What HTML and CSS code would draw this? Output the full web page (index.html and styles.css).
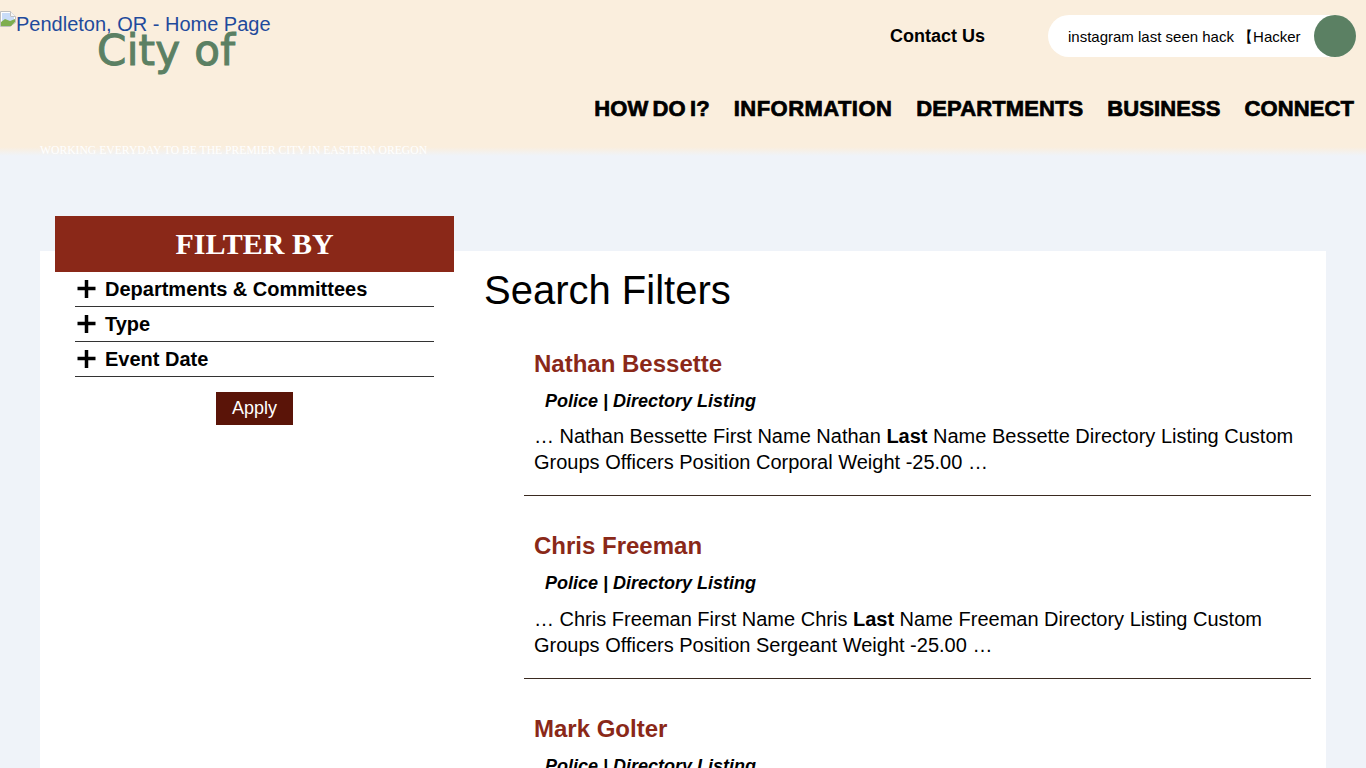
FILE: index.html
```html
<!DOCTYPE html>
<html lang="en">
<head>
    <meta charset="UTF-8">
    <meta name="viewport" content="width=device-width, initial-scale=1.0">
    <title>Search Filters</title>
    <link rel="stylesheet" href="styles.css">
</head>
<body>
    <header class="site-header">
        <div class="brand">
            <a class="logo-alt" href="#"><svg class="broken-img" width="16" height="16" viewBox="0 0 16 16"><path d="M.5.5h10l5 5v6l-3 2-2 2H.5z" fill="#fff" stroke="#c0c0c0"/><path d="M10.5.5v5h5" fill="#f6f6f6" stroke="#c0c0c0"/><path d="M2 2h8v4h4v3L2 12z" fill="#c9dcf8"/><path d="M1 15v-4l4-3 5 2 5-2v3l-4 4z" fill="#7fae4f"/></svg>Pendleton, OR - Home Page</a>
            <div class="logo-city">City of</div>
            <div class="tagline">WORKING EVERYDAY TO BE THE PREMIER CITY IN EASTERN OREGON</div>
        </div>
        <div class="header-right">
            <div class="top-row">
                <a class="contact" href="#">Contact Us</a>
                <div class="search">
                    <span class="search-text">instagram last seen hack 【Hacker</span>
                    <span class="search-btn"></span>
                </div>
            </div>
            <nav class="main-nav">
                <a href="#">HOW DO I?</a>
                <a href="#">INFORMATION</a>
                <a href="#">DEPARTMENTS</a>
                <a href="#">BUSINESS</a>
                <a href="#">CONNECT</a>
            </nav>
        </div>
    </header>

    <main class="page">
        <aside class="sidebar">
            <h2 class="filter-title">FILTER BY</h2>
            <ul class="filter-list">
                <li><svg class="plus" width="20" height="20" viewBox="0 0 20 20"><path d="M9.5 1v18M.5 9.5h18" stroke="#000" stroke-width="3.5"/></svg>Departments &amp; Committees</li>
                <li><svg class="plus" width="20" height="20" viewBox="0 0 20 20"><path d="M9.5 1v18M.5 9.5h18" stroke="#000" stroke-width="3.5"/></svg>Type</li>
                <li><svg class="plus" width="20" height="20" viewBox="0 0 20 20"><path d="M9.5 1v18M.5 9.5h18" stroke="#000" stroke-width="3.5"/></svg>Event Date</li>
            </ul>
            <div class="apply-row"><button class="apply">Apply</button></div>
        </aside>

        <section class="results">
            <h1>Search Filters</h1>
            <article class="result">
                <h3><a href="#">Nathan Bessette</a></h3>
                <p class="meta">Police | Directory Listing</p>
                <p class="snippet">… Nathan Bessette First Name Nathan <b>Last</b> Name Bessette Directory Listing Custom Groups Officers Position Corporal Weight -25.00 …</p>
            </article>
            <article class="result">
                <h3><a href="#">Chris Freeman</a></h3>
                <p class="meta">Police | Directory Listing</p>
                <p class="snippet">… Chris Freeman First Name Chris <b>Last</b> Name Freeman Directory Listing Custom Groups Officers Position Sergeant Weight -25.00 …</p>
            </article>
            <article class="result">
                <h3><a href="#">Mark Golter</a></h3>
                <p class="meta">Police | Directory Listing</p>
            </article>
        </section>
    </main>
</body>
</html>
```

FILE: styles.css
```css
html, body {
    height: 768px;
    overflow: hidden;
}
body {
    margin: 0;
    background-color: #eff3f9;
    font-family: "Liberation Sans", Arial, sans-serif;
    color: #000;
}
a {
    text-decoration: none;
}

/* header */
.site-header {
    display: flex;
    justify-content: space-between;
    height: 156px;
    background: linear-gradient(#faeedd 147px, #eff3f9 156px);
}
.brand {
    width: 440px;
}
.logo-alt {
    display: flex;
    align-items: flex-start;
    padding-top: 13px;
    height: 23px;
    font-size: 20px;
    line-height: 23px;
    color: #1f4a9c;
}
.broken-img {
    flex: none;
    margin-top: -2px;
}
.logo-city {
    margin: -9px 0 0 97px;
    height: 48px;
    font-family: "DejaVu Sans", sans-serif;
    font-size: 42px;
    line-height: 48px;
    letter-spacing: 0.3px;
    color: #5b8063;
    -webkit-text-stroke: 1px #5b8063;
}
.tagline {
    margin: 69px 0 0 40px;
    font-family: "Liberation Serif", serif;
    font-size: 11.65px;
    line-height: 14px;
    color: #fff;
    white-space: nowrap;
}
.header-right {
    display: flex;
    flex-direction: column;
    align-items: flex-end;
}
.top-row {
    display: flex;
    align-items: center;
    gap: 63px;
    margin: 15px 10px 0 0;
}
.contact {
    font-size: 18px;
    font-weight: bold;
    color: #000;
}
.search {
    display: flex;
    align-items: center;
    justify-content: space-between;
    width: 308px;
    height: 42px;
    padding-left: 20px;
    box-sizing: border-box;
    background-color: #fff;
    border-radius: 21px;
}
.search-text {
    padding-top: 2px;
    font-size: 15px;
    white-space: nowrap;
}
.search-btn {
    width: 42px;
    height: 42px;
    background-color: #5b8063;
    border-radius: 50%;
}
.main-nav {
    display: flex;
    gap: 24px;
    margin: 39px 12px 0 0;
}
.main-nav a {
    font-size: 22px;
    line-height: 26px;
    font-weight: bold;
    letter-spacing: 0.1px;
    word-spacing: -2px;
    color: #000;
    -webkit-text-stroke: 0.7px #000;
}
.main-nav a:nth-child(2) {
    letter-spacing: 0.45px;
}

/* content */
.page {
    display: flex;
    margin: 95px 40px 0;
    height: 517px;
    background-color: #fff;
}
.sidebar {
    flex: none;
    width: 399px;
    margin: -35px 0 0 15px;
}
.filter-title {
    margin: 0;
    height: 56px;
    background-color: #8a2818;
    color: #fff;
    font-family: "Liberation Serif", serif;
    font-size: 30px;
    line-height: 55px;
    text-align: center;
}
.filter-list {
    list-style: none;
    margin: 0 20px;
    padding: 0;
}
.filter-list li {
    display: flex;
    align-items: center;
    gap: 8px;
    height: 34px;
    border-bottom: 1px solid #333;
    font-size: 20px;
    font-weight: bold;
}
.plus {
    margin-left: 2px;
}
.apply-row {
    display: flex;
    justify-content: center;
    margin-top: 15px;
}
.apply {
    width: 77px;
    height: 33px;
    padding: 0;
    border: none;
    background-color: #5a1408;
    color: #fff;
    font-family: inherit;
    font-size: 18px;
}
.results {
    flex: 1;
    padding: 15px 15px 0 30px;
}
.results h1 {
    margin: 0 0 35.75px;
    font-size: 40px;
    line-height: 48px;
    font-weight: normal;
}
.result {
    margin-left: 40px;
    padding: 0 10px 19.75px;
    margin-bottom: 36.25px;
    border-bottom: 1px solid #3a2a20;
}
.result:last-child {
    border-bottom: none;
}
.result h3 {
    margin: 0;
    font-size: 24px;
    line-height: 28px;
}
.result h3 a {
    color: #8a2818;
}
.meta {
    margin: 9px 0 0 11px;
    font-size: 18px;
    line-height: 28px;
    font-weight: bold;
    font-style: italic;
}
.snippet {
    margin: 8.5px 0 0;
    font-size: 20px;
    line-height: 26px;
}
```
